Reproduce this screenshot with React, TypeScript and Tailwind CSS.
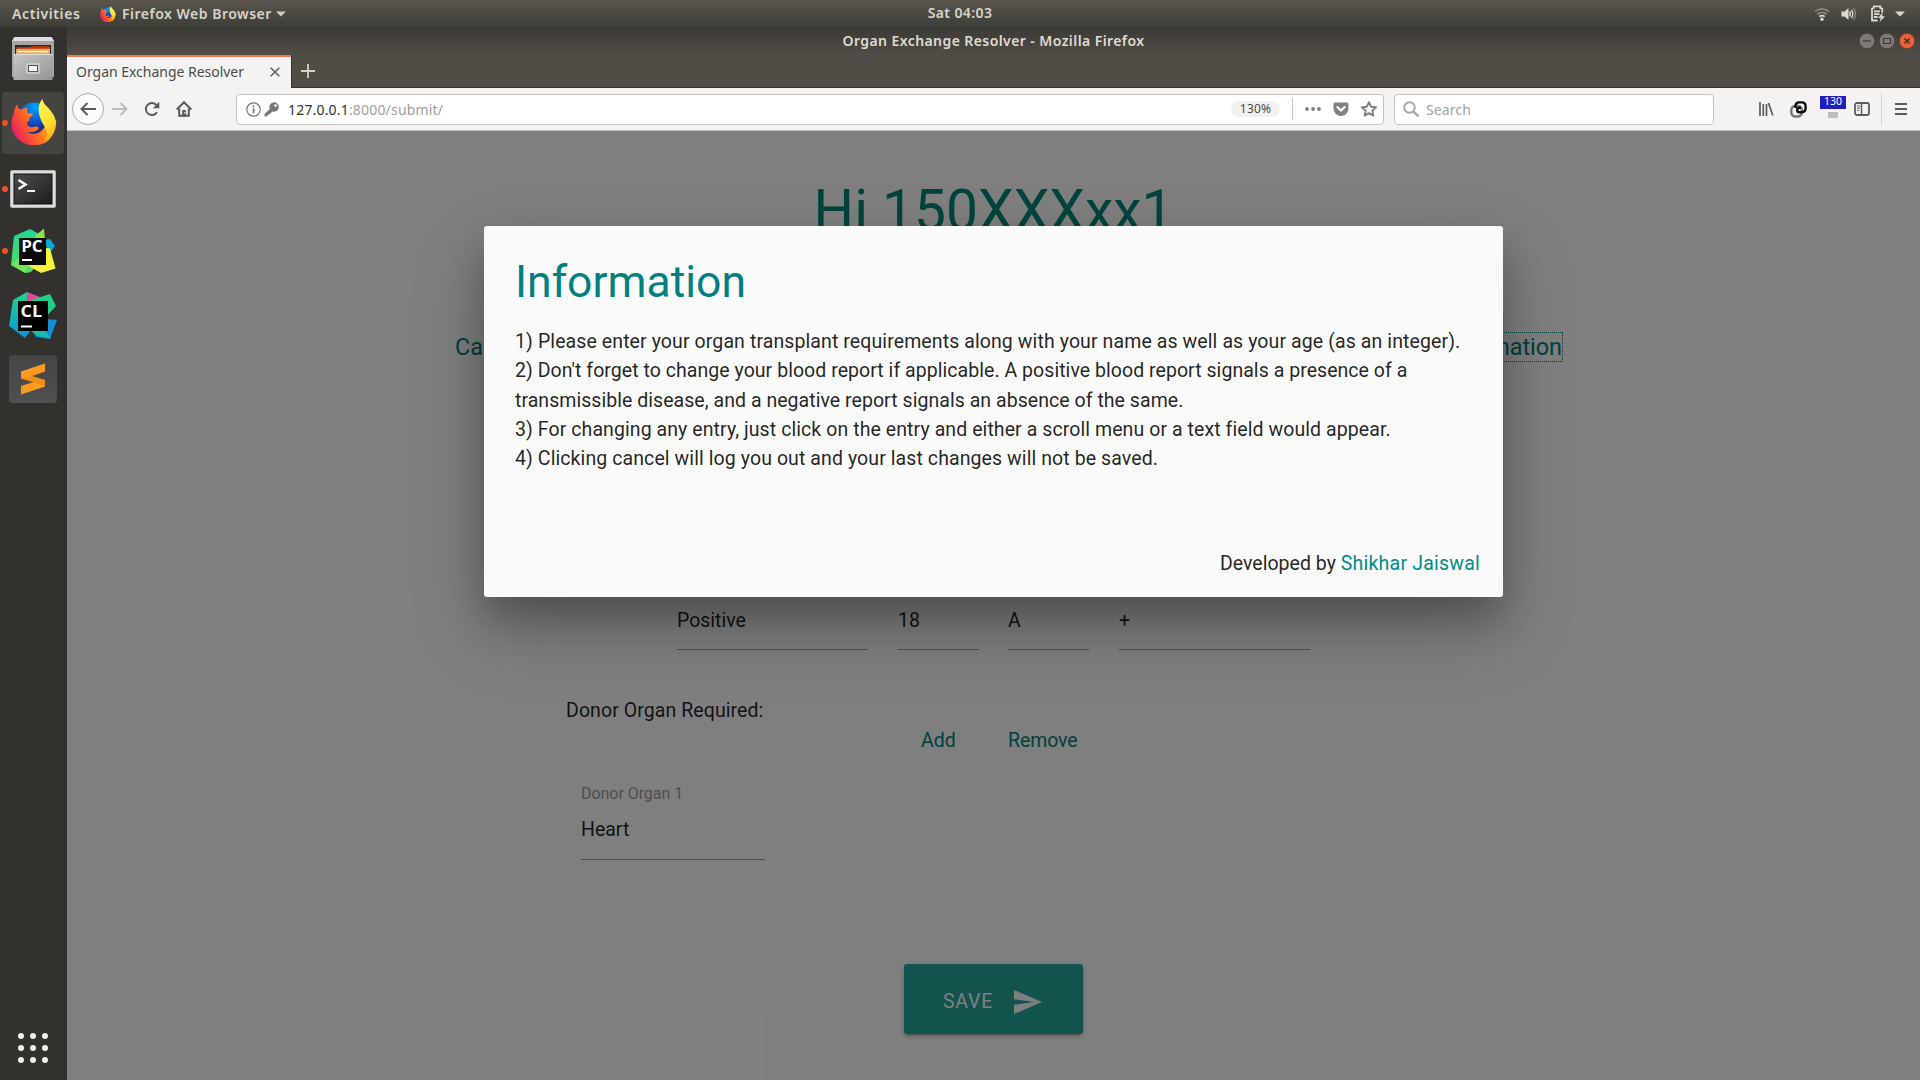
import React from "react";

const ubuntu = "font-['Noto_Sans',sans-serif]";

function FirefoxLogo({ size, id }: { size: number; id: string }) {
  return (
    <svg width={size} height={size} viewBox="0 0 46 46" className="block shrink-0">
      <defs>
        <radialGradient id={id + "g"} cx="0.55" cy="0.1" r="0.6">
          <stop offset="0" stopColor="#00a5ff" />
          <stop offset="0.6" stopColor="#0d5fd8" />
          <stop offset="1" stopColor="#1b2f93" />
        </radialGradient>
        <linearGradient id={id + "f"} x1="1" y1="0.2" x2="0" y2="0.7">
          <stop offset="0" stopColor="#ffd020" />
          <stop offset="0.35" stopColor="#ff9a16" />
          <stop offset="0.65" stopColor="#ff5a2a" />
          <stop offset="1" stopColor="#e01a66" />
        </linearGradient>
        <linearGradient id={id + "t"} x1="0.3" y1="0" x2="0.7" y2="1">
          <stop offset="0" stopColor="#fff14f" />
          <stop offset="0.6" stopColor="#ffe031" />
          <stop offset="1" stopColor="#ffa51c" />
        </linearGradient>
      </defs>
      <circle cx="23" cy="22" r="18.500" fill={`url(#${id}g)`} />
      <path d="M6.500 5C6 8 7.500 9 9 10.500C11 10 13 9 16 8.500C16 10.500 16 12 17 14L22 14.500C22 16.500 20 17.500 18 19C19 21 18 22 16.500 22.500C15 26 18 29 22 28C24 27.500 26 27 28 29C26 33 20 33.500 16 33C23 37 31 34 34 27C36 30 38 30 41 27L45 20C46 30 42 37 37 42C29 48 15 48 7 40C-1 32-1 22 3 14C3 10 4.500 7 6.500 5Z" fill={`url(#${id}f)`} />
      <path d="M31.500 0C32 5 36 7 39.500 11.500C45 18 46 24 43 32C40 39 36 41 33 42C38 36 36 32 34 28C29 21 24 8 31.500 0Z" fill={`url(#${id}t)`} />
    </svg>
  );
}

function TopBar() {
  return (
    <header className={`grid h-[27px] shrink-0 grid-cols-[1fr_auto_1fr] items-center bg-linear-to-b from-[#5a564d] to-[#3e3d38] text-[14px] font-semibold text-[#d8d4cc] ${ubuntu}`}>
      <div className="flex items-center pl-[12px]">
        <span className="w-[88px] whitespace-nowrap pb-px tracking-[0.6px]">Activities</span>
        <FirefoxLogo size={16} id="top" />
        <span className="ml-[6px] w-[152px] whitespace-nowrap pb-px tracking-[0.5px]">Firefox Web Browser</span>
        <svg width="10" height="6" viewBox="0 0 10 6" className="ml-[2px]"><path d="M0 .5h10L5 5.500z" fill="#cfccc4" /></svg>
      </div>
      <span className="whitespace-nowrap pb-[2px] tracking-[0.4px]">Sat 04:03</span>
      <div className="flex items-center justify-end pr-[15px]">
        <svg width="16" height="16" viewBox="0 0 16 16" className="mr-[11px]" fill="none" stroke="#dcd9d2" strokeWidth="1.800">
          <path d="M1.200 5.500Q8 .2 14.800 5.500M3.300 8.200Q8 4.600 12.700 8.200" stroke="#8a877f" />
          <path d="M5.300 10.600Q8 8.600 10.700 10.600" />
          <circle cx="8" cy="13.300" r="1.700" fill="#dcd9d2" stroke="none" />
        </svg>
        <svg width="16" height="16" viewBox="0 0 16 16" className="mr-[14px]" fill="none" stroke="#dcd9d2" strokeWidth="1.400">
          <path d="M.5 5.500h3L7.500 2v12l-4-3.500h-3z" fill="#dcd9d2" stroke="none" />
          <path d="M8.500 5.500q1.800 2.500 0 5M10.300 3.800q3 4.200 0 8.400" />
          <path d="M12.400 2.200q4.400 5.800 0 11.600" stroke="#8a877f" />
        </svg>
        <svg width="14" height="17" viewBox="0 0 14 17" className="mr-[10px]" fill="none" stroke="#dcd9d2" strokeWidth="1.800">
          <path d="M6.500 15.500H1V3.700L2.800 3V1.300h6.500V3l1.900.7V7.500M3 6.300h6M3 9.200h5.500M3 12h3.500" />
          <path d="M12 7l-5 6h2.800l-1.200 4L14 11.300h-3z" fill="#dcd9d2" stroke="none" />
        </svg>
        <svg width="10" height="6" viewBox="0 0 10 6"><path d="M0 .5h10L5 5.500z" fill="#dcd9d2" /></svg>
      </div>
    </header>
  );
}

function Dot({ on }: { on?: boolean }) {
  return <span className={on ? "ml-[2px] size-[6px] shrink-0 rounded-full bg-[#e95420]" : "ml-[2px] size-[6px] shrink-0"} />;
}

function Dock() {
  return (
    <aside className="flex w-[67px] shrink-0 flex-col bg-[#33312d]">
      <div className="flex h-[63px] items-start pt-[8px]">
        <svg width="44" height="46" viewBox="0 0 44 46" className="ml-[11px]">
          <defs>
            <linearGradient id="cab" x1="0" y1="0" x2="1" y2="1"><stop offset="0" stopColor="#c6c6c6" /><stop offset="1" stopColor="#959595" /></linearGradient>
          </defs>
          <path d="M3.500 2h37L43 6v36H1V6z" fill="#a5a5a5" />
          <path d="M3.500 2h37L43 6H1z" fill="#dedede" />
          <path d="M4 10h36v12H4z" fill="#2a2826" />
          <path d="M6 12h33v3H6z" fill="#cf4b1c" />
          <path d="M7 12h12l2-1h17v2H7z" fill="#a93a12" />
          <path d="M5 14h34v6H5z" fill="#eda95e" />
          <path d="M7 16h30v1.200H7z" fill="#fff" />
          <path d="M2.500 19h39v26h-39z" fill="url(#cab)" />
          <path d="M2.500 19h39v1h-39z" fill="#ddd" />
          <rect x="15" y="28" width="14" height="11" rx="2" fill="#c9c9c9" />
          <rect x="17.500" y="30.500" width="9" height="6" fill="#f2f2f2" stroke="#555" />
        </svg>
      </div>
      <div className="ml-[2px] mt-[2px] flex h-[62px] w-[62px] shrink-0 items-center rounded-[4px] bg-[#454440]">
        <span className="size-[6px] rounded-full bg-[#e95420]" />
        <div className="mb-[2px] ml-[3px]"><FirefoxLogo size={46} id="dock" /></div>
      </div>
      <div className="mt-[16px] flex h-[38px] items-center">
        <Dot on />
        <svg width="46" height="38" viewBox="0 0 46 38" className="ml-[2px]">
          <defs><linearGradient id="term" x1="0" y1="0" x2="1" y2="1"><stop offset="0" stopColor="#4a4a4a" /><stop offset=".5" stopColor="#363636" /><stop offset="1" stopColor="#1c1c1c" /></linearGradient></defs>
          <rect x=".5" y=".5" width="45" height="37" rx="1.500" fill="#dcdcdc" stroke="#b5b5b5" />
          <rect x="4" y="4" width="38" height="30" fill="url(#term)" stroke="#0c0c0c" />
          <path d="M8.500 10l7 4.500-7 4.500" fill="none" stroke="#f5f5f5" strokeWidth="2.600" />
          <path d="M17 21h8" stroke="#f5f5f5" strokeWidth="2" />
        </svg>
      </div>
      <div className="mt-[20px] flex h-[46px] items-center">
        <Dot on />
        <svg width="48" height="46" viewBox="0 0 48 46" className="ml-[1px]">
          <defs><linearGradient id="pg" x1="0" y1="0" x2="0" y2="1"><stop offset="0" stopColor="#22d68c" /><stop offset="1" stopColor="#56dc6c" /></linearGradient></defs>
          <path d="M35 12l6-1 5 7-6 8z" fill="#07a9d9" />
          <path d="M5 8L21 1l13 7 2 20-14 16-5 1L2 37z" fill="url(#pg)" />
          <path d="M25 9L35 .5 36 12z" fill="#93e04f" />
          <path d="M16 36l21-16 4 .5 5.500 20L32 45z" fill="#f7f03c" />
          <path d="M2 37l8-6 10 5-4 9z" fill="#75e35b" />
          <rect x="10" y="10" width="27" height="27" fill="#0b0b0b" />
          <path d="M13 32h10" stroke="#fff" strokeWidth="2" />
          <text x="12.200" y="24" fill="#fff" fontFamily="Open Sans, sans-serif" fontWeight="700" fontSize="15.500" textLength="21.500" lengthAdjust="spacingAndGlyphs">PC</text>
        </svg>
      </div>
      <div className="mt-[17px] flex h-[48px] items-center">
        <Dot />
        <svg width="49" height="48" viewBox="0 0 49 48" className="ml-[1px]">
          <defs><linearGradient id="cg" x1="0" y1="0" x2="0" y2="1"><stop offset="0" stopColor="#25d48a" /><stop offset="1" stopColor="#0a95dc" /></linearGradient></defs>
          <path d="M18 1L4 9 0 35l16 12 8-11z" fill="url(#cg)" />
          <path d="M18 1l13 5-8 8-5-2z" fill="#e04a98" />
          <path d="M22 9l19-6 6 12-11 12z" fill="#22ce87" />
          <path d="M24 39l12-11 12 1-7 19-14-2z" fill="#128ed2" />
          <path d="M20 38l14 0 8 9-14-2z" fill="#18bcae" />
          <rect x="9" y="10" width="30" height="30" fill="#000" />
          <path d="M12 35.500h11" stroke="#fff" strokeWidth="2" />
          <text x="11.500" y="26" fill="#fff" fontFamily="Open Sans, sans-serif" fontWeight="700" fontSize="16.500" textLength="21.500" lengthAdjust="spacingAndGlyphs">CL</text>
        </svg>
      </div>
      <div className="ml-[9px] mt-[16px] flex size-[48px] items-center justify-center rounded-[4px] bg-linear-to-b from-[#454545] to-[#505050]">
        <svg width="24" height="32" viewBox="0 0 24 32">
          <path d="M0 8.500L24 .5v8L11 13l13 4v6.500L0 31.500V23l12.500-4L0 15.500z" fill="#ff9a1e" />
          <path d="M11 13l13 4v6L0 15.500 11 13z" fill="#e8820c" opacity=".5" />
        </svg>
      </div>
      <div className="mb-[17px] ml-[18px] mt-auto grid w-[30px] grid-cols-3 gap-[6px]">
        {Array.from({ length: 9 }, (_, i) => <span key={i} className="size-[6px] rounded-full bg-[#f0eeea]" />)}
      </div>
    </aside>
  );
}

function TitleBar() {
  return (
    <div className="grid h-[28px] shrink-0 grid-cols-[1fr_auto_1fr] items-center bg-linear-to-b from-[#3b3934] to-[#504d46]">
      <span />
      <span className={`whitespace-nowrap pb-[2px] text-[14px] font-semibold tracking-[0.42px] text-[#dfdbd2] ${ubuntu}`}>Organ Exchange Resolver - Mozilla Firefox</span>
      <div className="flex items-center justify-end gap-[4px] pr-[5px]">
        <svg width="16" height="16" viewBox="0 0 16 16"><circle cx="8" cy="8" r="7.700" fill="#7d7b74" stroke="#35332f" strokeWidth=".5" /><path d="M4 8h8" stroke="#3c3b37" strokeWidth="1.200" /></svg>
        <svg width="16" height="16" viewBox="0 0 16 16"><circle cx="8" cy="8" r="7.700" fill="#7d7b74" stroke="#35332f" strokeWidth=".5" /><path d="M4.500 5.500h7v5h-7z" fill="none" stroke="#3c3b37" strokeWidth="1.200" /></svg>
        <svg width="16" height="16" viewBox="0 0 16 16"><circle cx="8" cy="8" r="7.700" fill="#ea6038" stroke="#35332f" strokeWidth=".5" /><path d="M5.500 5.500l5 5M10.500 5.500l-5 5" stroke="#46261a" strokeWidth="1.400" /></svg>
      </div>
    </div>
  );
}

function TabStrip() {
  return (
    <div className="flex h-[33px] shrink-0 bg-[#504d46]">
      <div className="flex w-[224px] items-center border-t-2 border-[#f07746] bg-[#f4f3f1] pl-[9px]">
        <span className={`w-[194px] whitespace-nowrap pb-[2px] text-[14px] tracking-[-0.02px] text-[#4c4c4c] ${ubuntu}`}>Organ Exchange Resolver</span>
        <svg width="10" height="10" viewBox="0 0 10 10" className="mb-px"><path d="M.7.7l8.600 8.600M9.300.7L.7 9.300" stroke="#5c5c5c" strokeWidth="1.500" /></svg>
      </div>
      <div className="flex grow items-center border-b border-l border-[#33322e] pl-[9px]">
        <svg width="14" height="14" viewBox="0 0 14 14"><path d="M7 0v14M0 7h14" stroke="#d4d1ca" strokeWidth="1.800" /></svg>
      </div>
    </div>
  );
}

function NavBar() {
  return (
    <div className={`flex h-[43px] shrink-0 items-center border-b border-[#c2c0bd] bg-[#f4f3f1] ${ubuntu}`}>
      <div className="ml-[5px] flex size-[32px] shrink-0 items-center justify-center rounded-full border border-[#aeaca9] bg-[#fbfbfb]">
        <svg width="16" height="14" viewBox="0 0 16 14" fill="none" stroke="#5a5a5a" strokeWidth="2"><path d="M16 7H1.500M7.500 1L1.500 7l6 6" /></svg>
      </div>
      <svg width="16" height="14" viewBox="0 0 16 14" fill="none" stroke="#bdbcba" strokeWidth="2" className="ml-[8px]"><path d="M0 7h14.500M8.500 1l6 6-6 6" /></svg>
      <svg width="16" height="16" viewBox="0 0 16 16" className="ml-[16px]"><path d="M13 11.200A6 6 0 1 1 12.500 4.200" fill="none" stroke="#5a5a5a" strokeWidth="2" /><path d="M15.300.8v6.400H8.900z" fill="#5a5a5a" /></svg>
      <svg width="16" height="16" viewBox="0 0 16 16" className="ml-[16px]" fill="none" stroke="#5a5a5a" strokeWidth="2"><path d="M.7 8.500L8 1.200l7.300 7.300" /><path d="M3.200 7.500v7.300h9.600V7.500" /><path d="M6.200 9h3.600v6.500H6.200z" fill="#5a5a5a" stroke="none" /><path d="M8.200 11h1v1.500h-1z" fill="#fff" stroke="none" /></svg>
      <div className="ml-[44px] flex h-[31px] w-[1148px] shrink-0 items-center rounded-[4px] border border-[#c4c2bf] bg-white">
        <svg width="15" height="15" viewBox="0 0 15 15" className="ml-[9px]"><circle cx="7.500" cy="7.500" r="6.700" fill="none" stroke="#777" strokeWidth="1.200" /><path d="M6.700 6.200h1.700v5H6.700zM6.700 3.600h1.700v1.600H6.700z" fill="#777" /></svg>
        <svg width="15" height="15" viewBox="0 0 15 15" className="ml-[3px]"><path d="M5.800 7A4.700 4.700 0 1 1 8.500 9.500L5 12.700H3.600V14L1 14.700.3 12.300z" fill="#777" /><circle cx="11.500" cy="3.500" r="1.300" fill="#fff" /></svg>
        <span className="ml-[9px] grow whitespace-nowrap text-[14px] tracking-[0.18px] text-[#a0a0a0]"><span className="text-[#333]">127.0.0.1</span>:8000/submit/</span>
        <span className="flex h-[16px] w-[49px] items-center justify-center rounded-[8px] bg-[#f1f1f1] text-[12px] tracking-[0.2px] text-[#4a4a4a]">130%</span>
        <span className="ml-[12px] h-[22px] w-px bg-[#c8c8c8]" />
        <svg width="16" height="4" viewBox="0 0 16 4" className="ml-[12px]" fill="#808080"><circle cx="2" cy="2" r="1.900" /><circle cx="8" cy="2" r="1.900" /><circle cx="14" cy="2" r="1.900" /></svg>
        <svg width="16" height="15" viewBox="0 0 16 15" className="ml-[12px]"><path d="M2 .5h12a1.500 1.500 0 0 1 1.500 1.500v4.500a7.500 7.500 0 0 1-15 0V2A1.500 1.500 0 0 1 2 .5z" fill="#808080" /><path d="M4.300 5L8 8.500 11.700 5" fill="none" stroke="#fff" strokeWidth="2" strokeLinecap="round" /></svg>
        <svg width="16" height="16" viewBox="0 0 16 16" className="ml-[12px] mr-[6px]"><path d="M8 1.200l2.100 4.500 4.900.6-3.600 3.400.9 4.900L8 12.200l-4.300 2.400.9-4.900L1 6.300l4.900-.6z" fill="none" stroke="#808080" strokeWidth="1.900" strokeLinejoin="round" /></svg>
      </div>
      <div className="ml-[10px] flex h-[31px] w-[320px] shrink-0 items-center rounded-[4px] border border-[#c4c2bf] bg-white">
        <svg width="17" height="17" viewBox="0 0 17 17" className="ml-[8px]" fill="none" stroke="#a8a8a8"><circle cx="6.500" cy="6.500" r="5.300" strokeWidth="1.900" /><path d="M10.500 10.500l5 5" strokeWidth="2.400" /></svg>
        <span className="ml-[6px] text-[14px] tracking-[0.1px] text-[#a3a3a3]">Search</span>
      </div>
      <svg width="15" height="14" viewBox="0 0 15 14" className="ml-[45px]" fill="none" stroke="#5c5c5c" strokeWidth="1.700"><path d="M1 0v14M4.300 2v12M7.500 2v12M9.500 1l4.300 12.500" /></svg>
      <svg width="17" height="17" viewBox="0 0 17 17" className="ml-[16px]" fill="none" strokeWidth="2.400"><rect x="1.300" y="5" width="10.500" height="10.500" rx="4" stroke="#777" /><path d="M5.500 7V5.300Q5.500 1.400 9.200 1.400h2.500q3.900 0 3.900 3.900v2Q15.600 11.200 11.700 11.200H9.800Q7.200 11.200 7.200 8.900T9.800 6.800H11" stroke="#0c0c0c" /></svg>
      <div className="ml-[13px] flex h-[31px] w-[26px] flex-col items-center pt-[2px]">
        <span className="flex h-[13px] w-[26px] shrink-0 items-center justify-center bg-[#1f1fc0] text-[10.5px] text-white">130</span>
        <span className="mt-[3px] h-[6px] w-[10px] bg-[#bdbdbd]" />
      </div>
      <svg width="16" height="14" viewBox="0 0 16 14" className="ml-[8px]" fill="none" stroke="#5c5c5c"><rect x="1" y="1" width="14" height="12" rx="2" strokeWidth="1.800" /><path d="M7.500 1v12" strokeWidth="1.500" /><path d="M3 4h3M3 6.200h3M3 8.400h2" strokeWidth="1" /></svg>
      <span className="ml-[11px] h-[32px] w-px bg-[#d5d3d0]" />
      <svg width="12" height="12" viewBox="0 0 12 12" className="ml-[13px]" stroke="#5a5a5a" strokeWidth="2"><path d="M0 1h12M0 6h12M0 11h12" /></svg>
    </div>
  );
}

function Field({ value, className }: { value: string; className: string }) {
  return <div className={`h-[45px] border-b border-[#9e9e9e] ${className}`}>{value}</div>;
}

function Page() {
  return (
    <main className="flex h-full flex-col bg-white text-[19.5px] leading-[29px] text-black/87">
      <h1 className="mt-[48px] text-center text-[56.9px] leading-[63px] text-[#00897b]">Hi 150XXXxx1</h1>
      <div className="ml-[388px] mr-[358px] mt-[91px] flex justify-between text-[23.4px] leading-[28px] text-[#008080]">
        <a>Cancel</a>
        <a className="outline-1 outline-dotted outline-[#008080]">Information</a>
      </div>
      <div className="ml-[610px] mt-[244px] flex">
        <Field value="Positive" className="w-[191px] pt-px" />
        <Field value="18" className="ml-[30px] w-[81px] pt-px" />
        <Field value="A" className="ml-[29px] w-[81px] pt-px" />
        <Field value="+" className="ml-[30px] w-[191px] pt-px" />
      </div>
      <div className="ml-[499px] mt-[46px] tracking-[0.08px]">Donor Organ Required:</div>
      <div className="ml-[854px] mt-px flex text-[#008080]">
        <a className="w-[87px]">Add</a>
        <a className="tracking-[-0.1px]">Remove</a>
      </div>
      <div className="ml-[514px] mt-[29px] w-[184px]">
        <div className="text-[16px] leading-[20px] tracking-[-0.05px] text-[#9e9e9e]">Donor Organ 1</div>
        <Field value="Heart" className="mt-[11px]" />
      </div>
      <button className="ml-[837px] mt-[104px] flex h-[70px] w-[179px] shrink-0 items-center rounded-[3px] bg-[#26a69a] pl-[39px] pt-[5px] text-[19.5px] tracking-[0.75px] text-white shadow-[0_3px_3px_0_rgba(0,0,0,0.14),0_1px_7px_0_rgba(0,0,0,0.12),0_4px_1px_-3px_rgba(0,0,0,0.2)]">
        <span className="w-[71px] text-left">SAVE</span>
        <svg width="28" height="24" viewBox="0 0 28 24"><path d="M0 0l28 12L0 24v-9.300L20 12 0 9.300z" fill="#fff" /></svg>
      </button>
    </main>
  );
}

function InfoModal() {
  return (
    <section className="mt-[95px] flex h-[371px] w-[1019px] flex-col rounded-[3px] bg-[#fafafa] text-[19.5px] leading-[29.25px] text-black/87 shadow-[0_21px_36px_0_rgba(0,0,0,0.22),0_32px_72px_0_rgba(0,0,0,0.21)]">
      <div className="px-[31px] pt-[32px]">
        <h2 className="text-[44.46px] leading-[49px] text-[#008080]">Information</h2>
        <div className="mt-[20px]">
          <p className="tracking-[0.1px]">1) Please enter your organ transplant requirements along with your name as well as your age (as an integer).</p>
          <p className="tracking-[0.045px]">2) Don't forget to change your blood report if applicable. A positive blood report signals a presence of a transmissible disease, and a negative report signals an absence of the same.</p>
          <p className="tracking-[0.08px]">3) For changing any entry, just click on the entry and either a scroll menu or a text field would appear.</p>
          <p className="tracking-[0.09px]">4) Clicking cancel will log you out and your last changes will not be saved.</p>
        </div>
      </div>
      <div className="mb-[19px] mt-auto pr-[23px] text-right tracking-[0.02px]">Developed by <a className="tracking-[0.22px] text-[#008b8b]">Shikhar Jaiswal</a></div>
    </section>
  );
}

export default function App() {
  return (
    <div className="flex h-[1080px] w-[1920px] flex-col overflow-hidden font-[Roboto,sans-serif]">
      <TopBar />
      <div className="flex min-h-0 grow">
        <Dock />
        <div className="flex min-w-0 grow flex-col">
          <TitleBar />
          <TabStrip />
          <NavBar />
          <div className="relative min-h-0 grow overflow-hidden">
            <Page />
            <div className="absolute inset-0 flex items-start justify-center bg-black/50">
              <InfoModal />
            </div>
          </div>
        </div>
      </div>
    </div>
  );
}
